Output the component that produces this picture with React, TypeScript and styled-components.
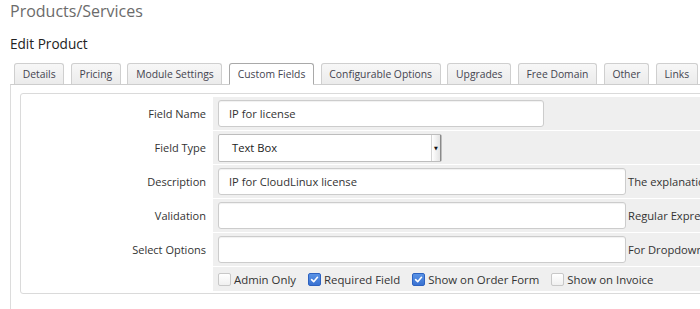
import styled, { createGlobalStyle } from "styled-components";

const GlobalStyle = createGlobalStyle`
  html, body {
    margin: 0;
    padding: 0;
    background: #ffffff;
    overflow: hidden;
  }
  body {
    font-family: "Open Sans", "DejaVu Sans", sans-serif;
    color: #333333;
  }
`;

const Page = styled.div`
  width: 1000px;
  padding: 0 0 0 10px;
`;

const PageTitle = styled.h1`
  margin: 0;
  font-size: 16px;
  line-height: 22px;
  font-weight: 400;
  color: #6b6b6b;
`;

const SubTitle = styled.h2`
  margin: 13px 0 0;
  font-size: 13.6px;
  line-height: 18px;
  font-weight: 400;
  color: #222222;
`;

const TabList = styled.div`
  display: flex;
  gap: 6.6px;
  margin: 10px 0 0 4px;
  position: relative;
  z-index: 1;
`;

const Tab = styled.div<{ $active?: boolean }>`
  height: 19px;
  padding: 1px 7.7px 0;
  line-height: 19px;
  font-size: 10.35px;
  color: #44444f;
  white-space: nowrap;
  border: 1px solid ${({ $active }) => ($active ? "#a9a9a9" : "#cfcfcf")};
  border-bottom: ${({ $active }) => ($active ? "1px solid #ffffff" : "none")};
  border-radius: 3px 3px 0 0;
  background: ${({ $active }) =>
    $active ? "#ffffff" : "linear-gradient(#f7f7f7, #ebebeb)"};
  margin-bottom: ${({ $active }) => ($active ? "-1px" : "0")};
`;

const Panel = styled.div`
  border-top: 1px solid #cdcdcd;
  border-left: 1px solid #dcdcdc;
  padding: 8px 0 40px 9px;
  background: #ffffff;
`;

const FormTable = styled.div`
  display: grid;
  grid-template-columns: 188px 1fr;
  gap: 1px 2px;
  padding: 3px 2px 2px;
  border: 1px solid #dadada;
  border-radius: 3px;
  background: #ffffff;
`;

const Label = styled.div<{ $short?: boolean }>`
  height: ${({ $short }) => ($short ? "24px" : "33px")};
  display: flex;
  align-items: center;
  justify-content: flex-end;
  padding-right: 5px;
  font-size: 11px;
  color: #333333;
  white-space: nowrap;
`;

const FieldCell = styled.div<{ $short?: boolean }>`
  height: ${({ $short }) => ($short ? "24px" : "33px")};
  display: flex;
  align-items: center;
  gap: 2px;
  padding-left: 5px;
  background: #efefef;
`;

const TextInput = styled.div<{ $width: number }>`
  box-sizing: border-box;
  width: ${({ $width }) => $width}px;
  height: 27px;
  padding: 0 10px;
  display: flex;
  align-items: center;
  font-size: 11.2px;
  color: #333333;
  background: #ffffff;
  border: 1px solid #cccccc;
  border-radius: 3px;
  box-shadow: inset 0 1px 1px rgba(0, 0, 0, 0.06);
  white-space: nowrap;
`;

const SelectBox = styled.div`
  box-sizing: border-box;
  width: 224px;
  height: 28px;
  display: flex;
  align-items: stretch;
  background: #ffffff;
  border: 1px solid #bdbdbd;
  border-radius: 2px;
`;

const SelectValue = styled.div`
  flex: 1;
  display: flex;
  align-items: center;
  padding-left: 13px;
  font-size: 11.2px;
  color: #222222;
`;

const SelectArrow = styled.div`
  width: 8px;
  display: flex;
  align-items: center;
  justify-content: center;
  background: linear-gradient(90deg, #ffffff, #e4e4e4);
  border-left: 1px solid #d4d4d4;
  border-right: 1px solid #8a8a8a;
  font-size: 5px;
  color: #111111;
`;

const HelpText = styled.span`
  font-size: 11.2px;
  color: #333333;
  white-space: nowrap;
`;

const CheckRow = styled.div`
  display: flex;
  align-items: center;
  gap: 12px;
`;

const CheckItem = styled.label`
  display: flex;
  align-items: center;
  gap: 3px;
  font-size: 11.4px;
  color: #333333;
  white-space: nowrap;
`;

const Box = styled.span<{ $checked?: boolean }>`
  box-sizing: border-box;
  width: 13px;
  height: 13px;
  display: inline-flex;
  align-items: center;
  justify-content: center;
  border-radius: 2px;
  border: 1px solid ${({ $checked }) => ($checked ? "#2d62c0" : "#c8c8c8")};
  background: ${({ $checked }) =>
    $checked ? "linear-gradient(#5a93e6, #3a72d1)" : "linear-gradient(#ffffff, #f0f0f0)"};
`;

const CheckBox = ({ checked, label }: { checked?: boolean; label: string }) => (
  <CheckItem>
    <Box $checked={checked}>
      {checked && (
        <svg width="9" height="9" viewBox="0 0 10 10">
          <path d="M1.8 5.2 L4.1 7.4 L8.3 2.6" fill="none" stroke="#ffffff" strokeWidth="1.8" strokeLinecap="round" strokeLinejoin="round" />
        </svg>
      )}
    </Box>
    {label}
  </CheckItem>
);

const tabs = [
  "Details",
  "Pricing",
  "Module Settings",
  "Custom Fields",
  "Configurable Options",
  "Upgrades",
  "Free Domain",
  "Other",
  "Links",
];

export default function App() {
  return (
    <>
      <GlobalStyle />
      <Page>
        <PageTitle>Products/Services</PageTitle>
        <SubTitle>Edit Product</SubTitle>
        <TabList>
          {tabs.map((t) => (
            <Tab key={t} $active={t === "Custom Fields"}>
              {t}
            </Tab>
          ))}
        </TabList>
        <Panel>
          <FormTable>
            <Label>Field Name</Label>
            <FieldCell>
              <TextInput $width={326}>IP for license</TextInput>
            </FieldCell>

            <Label>Field Type</Label>
            <FieldCell>
              <SelectBox>
                <SelectValue>Text Box</SelectValue>
                <SelectArrow>▼</SelectArrow>
              </SelectBox>
            </FieldCell>

            <Label>Description</Label>
            <FieldCell>
              <TextInput $width={408}>IP for CloudLinux license</TextInput>
              <HelpText>The explanation to show users</HelpText>
            </FieldCell>

            <Label>Validation</Label>
            <FieldCell>
              <TextInput $width={408} />
              <HelpText>Regular Expression Validation String</HelpText>
            </FieldCell>

            <Label>Select Options</Label>
            <FieldCell>
              <TextInput $width={408} />
              <HelpText>For Dropdowns Only - Comma Seperated List</HelpText>
            </FieldCell>

            <Label $short />
            <FieldCell $short>
              <CheckRow>
                <CheckBox label="Admin Only" />
                <CheckBox checked label="Required Field" />
                <CheckBox checked label="Show on Order Form" />
                <CheckBox label="Show on Invoice" />
              </CheckRow>
            </FieldCell>
          </FormTable>
        </Panel>
      </Page>
    </>
  );
}
